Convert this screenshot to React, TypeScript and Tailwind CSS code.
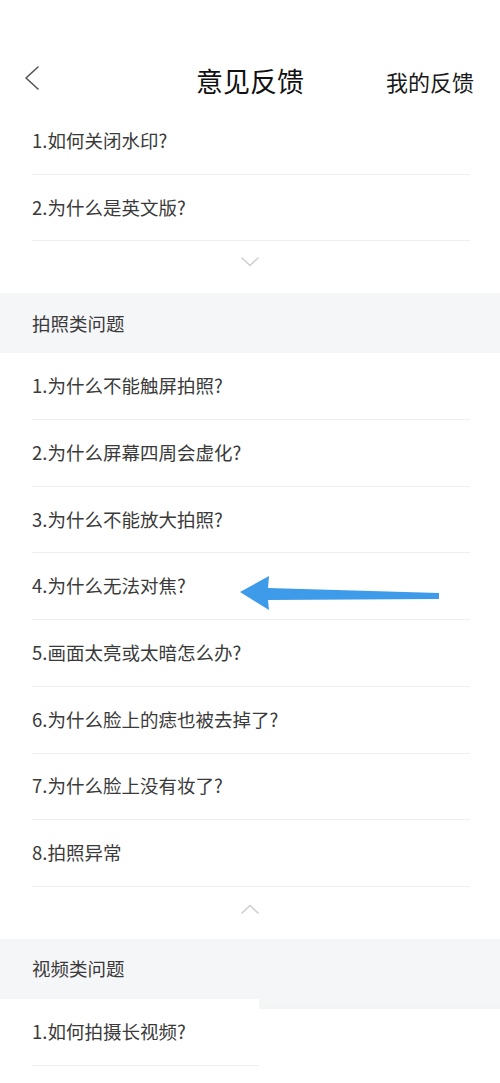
import React from 'react'

const topQuestions = ['1.如何关闭水印?', '2.为什么是英文版?']

const photoQuestions = [
  '1.为什么不能触屏拍照?',
  '2.为什么屏幕四周会虚化?',
  '3.为什么不能放大拍照?',
  '4.为什么无法对焦?',
  '5.画面太亮或太暗怎么办?',
  '6.为什么脸上的痣也被去掉了?',
  '7.为什么脸上没有妆了?',
  '8.拍照异常',
]

const font = { fontFamily: '"Noto Sans CJK SC", "Noto Sans", sans-serif' }

function Row({ text }: { text: string }) {
  return (
    <div className="pl-8 pr-[30px]">
      <div className="h-[66.7px] flex items-center border-b border-[#efefef] text-[18.5px] text-[#3a3a3a]">
        {text}
      </div>
    </div>
  )
}

function Chevron({ up }: { up?: boolean }) {
  return (
    <svg width="18" height="10" viewBox="0 0 18 10" fill="none">
      <path
        d={up ? 'M1 9L9 1.5L17 9' : 'M1 1L9 8.5L17 1'}
        stroke="#cfcfcf"
        strokeWidth="1.6"
        strokeLinecap="round"
        strokeLinejoin="round"
      />
    </svg>
  )
}

function SectionTitle({ text }: { text: string }) {
  return (
    <div className="h-[60px] bg-[#f5f6f8] pl-8 flex items-center text-[18.5px] text-[#3a3a3a]">
      {text}
    </div>
  )
}

export default function App() {
  return (
    <div className="relative w-[500px] h-[1083px] bg-white overflow-hidden" style={font}>
      {/* Header */}
      <div className="h-[108px] relative flex justify-center">
        <div className="absolute left-[24px] top-[66px]">
          <svg width="16" height="24" viewBox="0 0 16 24" fill="none">
            <path d="M14 1L2 12L14 23" stroke="#555" strokeWidth="1.6" strokeLinecap="round" strokeLinejoin="round" />
          </svg>
        </div>
        <div className="mt-[67px] text-[27px] text-[#111] leading-none">意见反馈</div>
        <div className="absolute right-[26px] top-[70px] text-[22px] text-[#1a1a1a] leading-none">我的反馈</div>
      </div>

      {topQuestions.map((q) => (
        <Row key={q} text={q} />
      ))}
      <div className="h-[52px] flex justify-center pt-[16px]">
        <Chevron />
      </div>

      <SectionTitle text="拍照类问题" />
      {photoQuestions.map((q) => (
        <Row key={q} text={q} />
      ))}
      <div className="h-[52px] flex justify-center pt-[17px]">
        <Chevron up />
      </div>

      <SectionTitle text="视频类问题" />
      <div className="flex">
        <div className="w-[259px] pl-8">
          <div className="h-[66.7px] flex items-center border-b border-[#efefef] text-[18.5px] text-[#3a3a3a]">
            1.如何拍摄长视频?
          </div>
        </div>
        <div className="flex-1">
          <div className="h-[10px] bg-gradient-to-b from-[#f5f6f8] to-[#f3f5f3]" />
        </div>
      </div>

      {/* annotation arrow */}
      <svg className="absolute left-[236px] top-[572px]" width="210" height="42" viewBox="0 0 210 42">
        <path d="M4 20L33 4L32 16L203 21L203 27L32 28L33 38Z" fill="#3d9be9" />
      </svg>
    </div>
  )
}
